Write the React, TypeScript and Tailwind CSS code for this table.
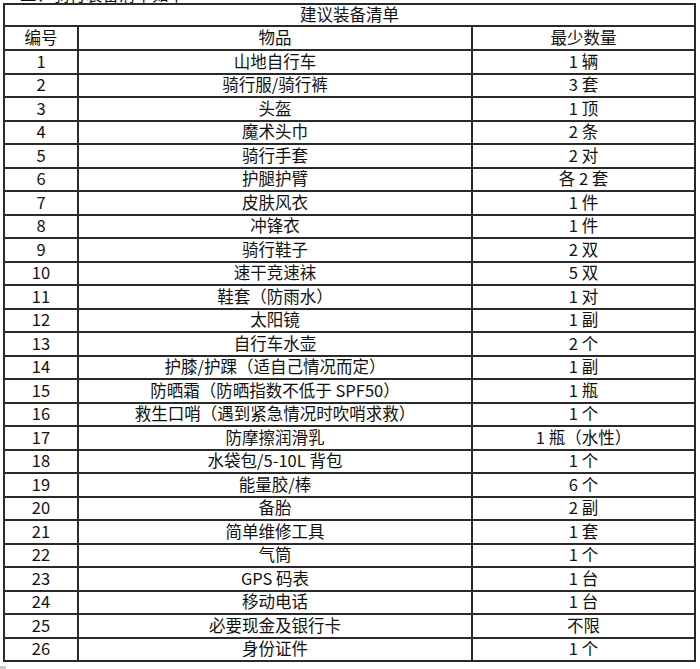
import React from "react";

const items: [string, string][] = [
  ["山地自行车", "1 辆"],
  ["骑行服/骑行裤", "3 套"],
  ["头盔", "1 顶"],
  ["魔术头巾", "2 条"],
  ["骑行手套", "2 对"],
  ["护腿护臂", "各 2 套"],
  ["皮肤风衣", "1 件"],
  ["冲锋衣", "1 件"],
  ["骑行鞋子", "2 双"],
  ["速干竞速袜", "5 双"],
  ["鞋套（防雨水）", "1 对"],
  ["太阳镜", "1 副"],
  ["自行车水壶", "2 个"],
  ["护膝/护踝（适自己情况而定）", "1 副"],
  ["防晒霜（防晒指数不低于 SPF50）", "1 瓶"],
  ["救生口哨（遇到紧急情况时吹哨求救）", "1 个"],
  ["防摩擦润滑乳", "1 瓶（水性）"],
  ["水袋包/5-10L 背包", "1 个"],
  ["能量胶/棒", "6 个"],
  ["备胎", "2 副"],
  ["简单维修工具", "1 套"],
  ["气筒", "1 个"],
  ["GPS 码表", "1 台"],
  ["移动电话", "1 台"],
  ["必要现金及银行卡", "不限"],
  ["身份证件", "1 个"],
];

const App = () => {
  return (
    <div className="w-[700px] h-[669px] overflow-hidden bg-white text-[#111] font-['Noto_Sans_CJK_SC','Noto_Sans',sans-serif] text-[16.5px]">
      {/* cut-off line above the table */}
      <div className="h-[3px] overflow-hidden pl-[20px]">
        <div className="-mt-[15px] leading-[18px] whitespace-nowrap">
          二、骑行装备清单如下
        </div>
      </div>

      <div className="ml-[3px] w-[693px] border-2 border-[#2a2a2a]">
        <div className="h-[20px] flex items-center justify-center leading-none pb-px">
          建议装备清单
        </div>
        <div className="h-[24px] border-t-2 border-[#2a2a2a] grid grid-cols-[72px_394px_1fr] leading-none">
          <div className="flex items-center justify-center pb-px">编号</div>
          <div className="flex items-center justify-center border-l-2 border-[#2a2a2a] pb-px">物品</div>
          <div className="flex items-center justify-center border-l-2 border-[#2a2a2a] pb-px">最少数量</div>
        </div>
        {items.map(([name, qty], i) => (
          <div
            key={i}
            className={`${i % 2 === 0 ? "h-[24px]" : "h-[23px]"} border-t-2 border-[#2a2a2a] grid grid-cols-[72px_394px_1fr] leading-none`}
          >
            <div className="flex items-center justify-center pb-[2px]">{i + 1}</div>
            <div className="flex items-center justify-center border-l-2 border-[#2a2a2a] whitespace-nowrap pb-[2px]">
              {name}
            </div>
            <div className="flex items-center justify-center border-l-2 border-[#2a2a2a] whitespace-nowrap pb-[2px]">
              {qty}
            </div>
          </div>
        ))}
      </div>

      <div className="mt-[4px] w-[6px] h-[3px] bg-[#c8c8c8]" />
    </div>
  );
};

export default App;
